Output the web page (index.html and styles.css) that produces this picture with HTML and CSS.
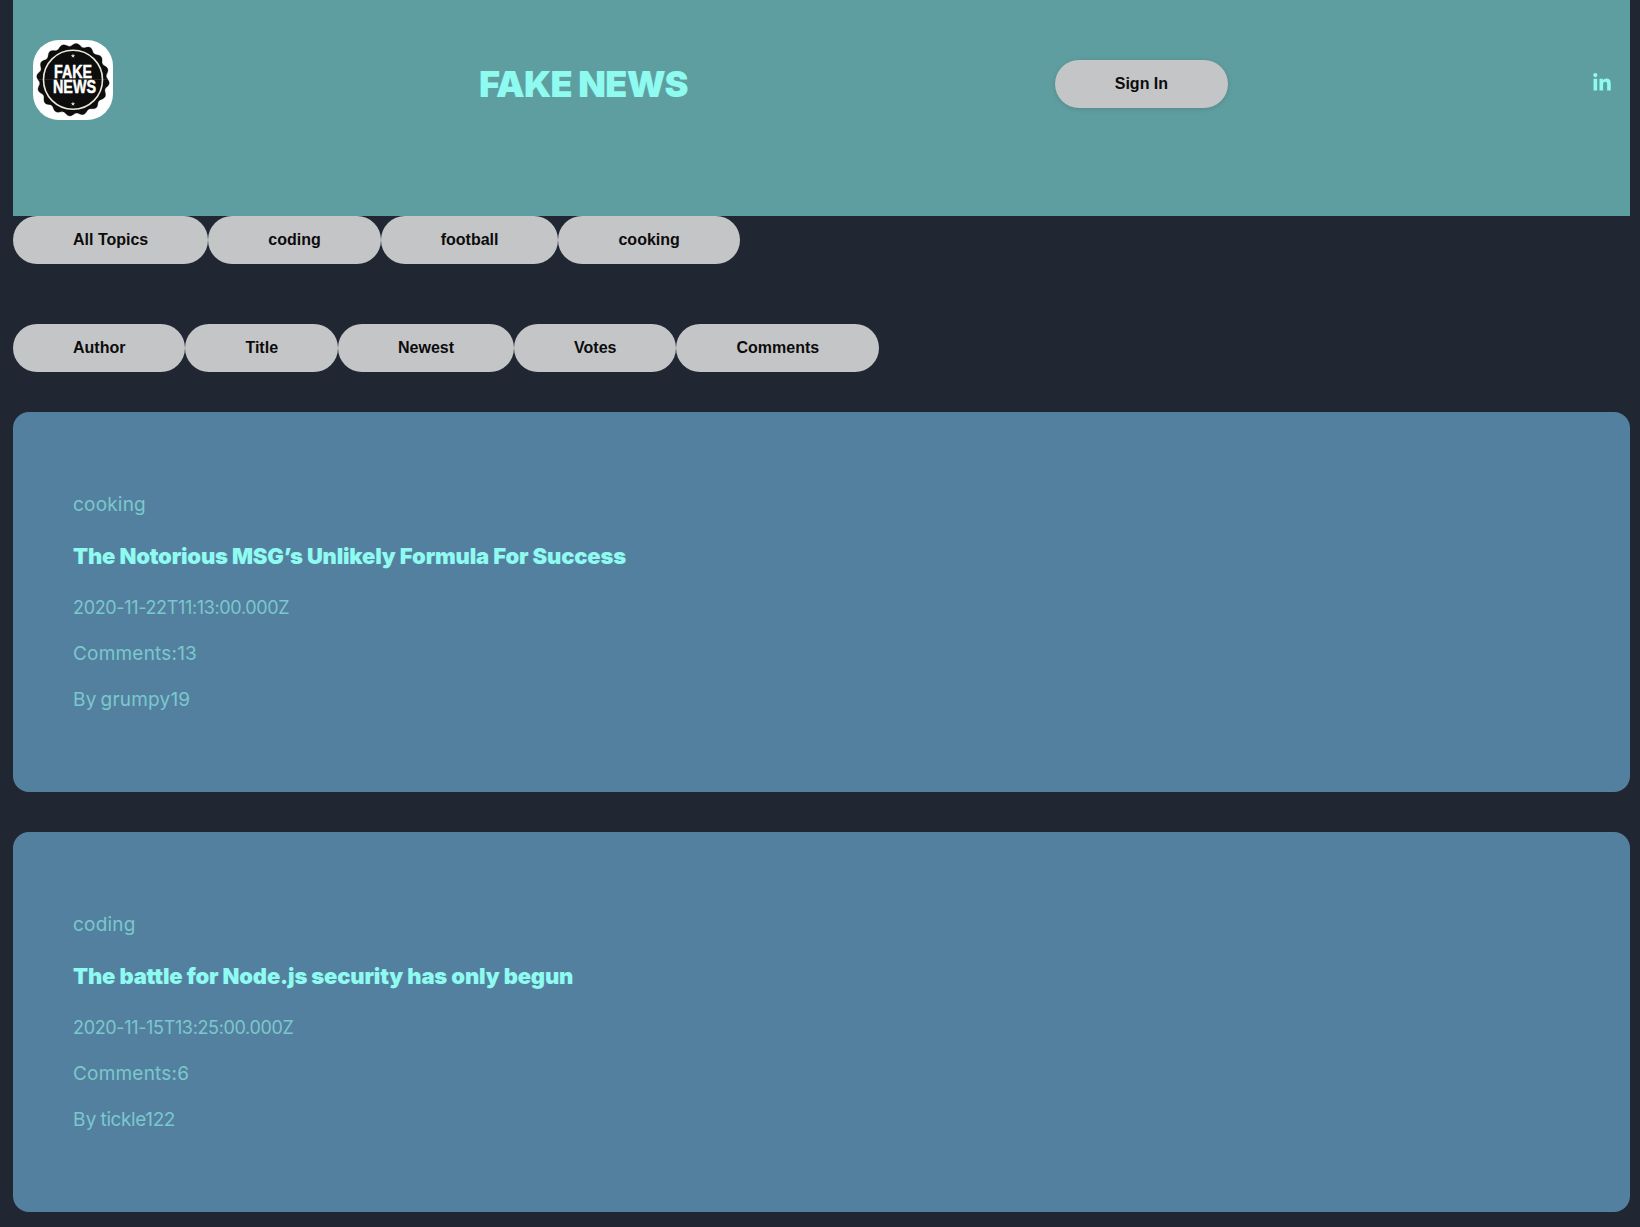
FILE: index.html
```html
<!DOCTYPE html>
<html lang="en">
<head>
<meta charset="utf-8">
<title>Fake News</title>
<link rel="stylesheet" href="styles.css">
</head>
<body>
<header class="site-header">
  <div class="logo">
    <svg viewBox="0 0 80 80" width="80" height="80" role="img" aria-label="Fake News">
      <defs>
        <path id="seal-quarter" d="M0 0L35 0Q37.82 3.72 34.33 6.83Q30.62 9.29 32.34 13.39Q33.51 17.91 29.1 19.45Q24.74 20.3 24.75 24.75Q24.11 29.37 19.45 29.1Q15.08 28.22 13.39 32.34Q11.03 36.36 6.83 34.33Q3.14 31.85 0 35Z"/>
      </defs>
      <g class="logo-seal">
        <use href="#seal-quarter" transform="translate(40 39.7)"/>
        <use href="#seal-quarter" transform="translate(40 39.7) rotate(90)"/>
        <use href="#seal-quarter" transform="translate(40 39.7) rotate(180)"/>
        <use href="#seal-quarter" transform="translate(40 39.7) rotate(270)"/>
      </g>
      <circle class="logo-ring" cx="40" cy="39.7" r="29.5"/>
      <text class="logo-text" x="40" y="38" textLength="38" lengthAdjust="spacingAndGlyphs">FAKE</text>
      <text class="logo-text" x="41.5" y="53" textLength="43" lengthAdjust="spacingAndGlyphs">NEWS</text>
      <polygon class="logo-star" points="40,13.4 40.6,15.2 42.3,15.2 40.9,16.2 41.4,17.8 40,16.8 38.6,17.8 39.1,16.2 37.7,15.2 39.4,15.2"/>
      <polygon class="logo-star" points="40,61.4 40.6,63.2 42.3,63.2 40.9,64.2 41.4,65.8 40,64.8 38.6,65.8 39.1,64.2 37.7,63.2 39.4,63.2"/>
    </svg>
  </div>
  <h1 class="site-title">FAKE NEWS</h1>
  <button class="pill pill-raised">Sign In</button>
  <a class="social" href="#" aria-label="LinkedIn">
    <svg viewBox="0 0 448 512" width="18" height="20"><path d="M100.28 448H7.4V148.9h92.88zM53.79 108.1C24.09 108.1 0 83.5 0 53.8a53.79 53.79 0 0 1 107.58 0c0 29.7-24.1 54.3-53.79 54.3zM447.9 448h-92.68V302.4c0-34.7-.7-79.2-48.29-79.2-48.29 0-55.69 37.7-55.69 76.7V448h-92.78V148.9h89.08v40.8h1.3c12.4-23.5 42.69-48.3 87.88-48.3 94 0 111.28 61.9 111.28 142.3V448z"/></svg>
  </a>
</header>

<nav class="pill-row topics">
  <button class="pill">All Topics</button>
  <button class="pill">coding</button>
  <button class="pill">football</button>
  <button class="pill">cooking</button>
</nav>

<nav class="pill-row sorts">
  <button class="pill">Author</button>
  <button class="pill">Title</button>
  <button class="pill">Newest</button>
  <button class="pill">Votes</button>
  <button class="pill">Comments</button>
</nav>

<main class="articles">
  <article class="card">
    <p class="meta meta-topic">cooking</p>
    <h2 class="card-title">The Notorious MSG’s Unlikely Formula For Success</h2>
    <p class="meta meta-date">2020-11-22T11:13:00.000Z</p>
    <p class="meta">Comments:13</p>
    <p class="meta">By grumpy19</p>
  </article>
  <article class="card">
    <p class="meta meta-topic">coding</p>
    <h2 class="card-title">The battle for Node.js security has only begun</h2>
    <p class="meta meta-date">2020-11-15T13:25:00.000Z</p>
    <p class="meta">Comments:6</p>
    <p class="meta">By <span class="tight">tickle122</span></p>
  </article>
</main>
</body>
</html>
```
FILE: styles.css
```css
* { box-sizing: border-box; }

html, body { margin: 0; padding: 0; }

body {
  background: #202733;
  padding: 0 10px 0 13px;
  height: 1227px;
  overflow: hidden;
  font-family: "Inter", "Liberation Sans", sans-serif;
}

.site-header {
  display: flex;
  justify-content: space-between;
  align-items: flex-start;
  height: 216px;
  padding: 40px 19px 0 20px;
  background: #5f9ea0;
}

.logo {
  width: 80px;
  height: 80px;
  background: #fff;
  border-radius: 26px;
  overflow: hidden;
}

.logo svg { display: block; }
.logo-seal { fill: #0d0d0d; stroke: #0d0d0d; stroke-width: 0.3; }
.logo-ring { fill: none; stroke: #ece8d8; stroke-width: 1.6; }
.logo-star { fill: #e8e4d4; }
.logo-text {
  fill: #fff;
  stroke: #fff;
  stroke-width: 0.5;
  font-family: "Liberation Sans", sans-serif;
  font-weight: 700;
  font-size: 18.5px;
  text-anchor: middle;
}

.site-title {
  margin: 18px 0 0 1px;
  font-size: 36px;
  line-height: 52px;
  font-weight: 900;
  color: #8ffaef;
  letter-spacing: -0.7px;
}

.pill {
  height: 48px;
  padding: 0 60px;
  border: 0;
  border-radius: 24px;
  background: #c4c5c7;
  color: #0c0c0c;
  font-family: "Liberation Sans", Arial, sans-serif;
  font-size: 16px;
  font-weight: 700;
}

.pill-raised {
  margin: 20px 0 0 2px;
  box-shadow: 0 1px 5px rgba(0, 0, 0, 0.15);
}

.social {
  display: block;
  margin-top: 33px;
  color: #8ffaef;
}

.social svg { display: block; fill: currentColor; }

.pill-row { display: flex; }
.sorts { margin-top: 60px; }

.articles {
  display: flex;
  flex-direction: column;
  gap: 40px;
  margin-top: 40px;
}

.card {
  height: 380px;
  padding: 79px 60px 0;
  background: #54809f;
  border-radius: 16px;
}

.meta {
  margin: 0 0 19px;
  font-size: 19px;
  line-height: 27px;
  letter-spacing: 0.2px;
  word-spacing: -1.5px;
  color: #7ac8cd;
}

.meta-topic { margin-bottom: 22px; }
.meta-date { font-size: 18px; letter-spacing: -0.35px; }
.tight { letter-spacing: -0.4px; }

.card-title {
  margin: 0 0 21px;
  font-size: 22px;
  line-height: 33px;
  font-weight: 900;
  letter-spacing: -0.18px;
  color: #8ffaef;
}
```
